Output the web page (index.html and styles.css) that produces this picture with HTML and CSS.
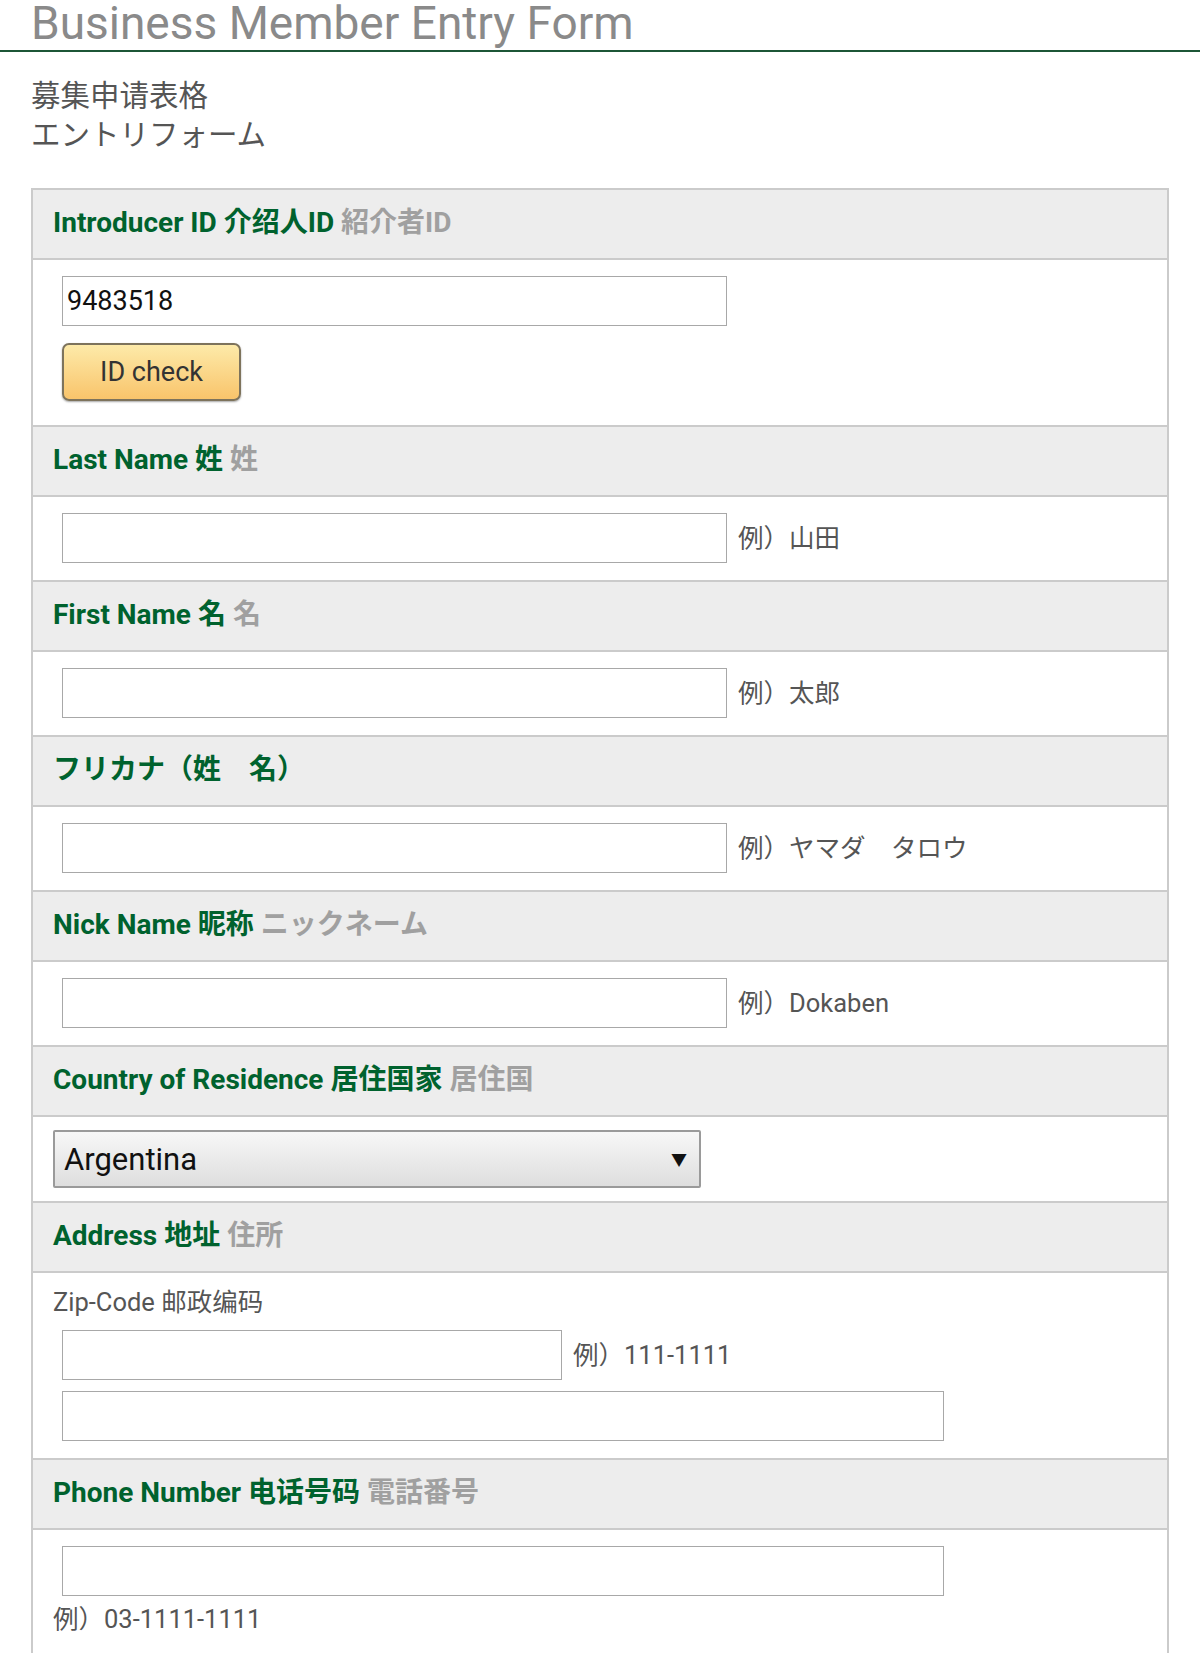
FILE: index.html
```html
<!DOCTYPE html>
<html lang="ja">
<head>
<meta charset="utf-8">
<title>Business Member Entry Form</title>
<link rel="stylesheet" href="styles.css">
</head>
<body>
<h1 class="title">Business Member Entry Form</h1>
<div class="subtitle">
  <div lang="zh-CN" class="sc">募集申请表格</div>
  <div class="jp">エントリフォーム</div>
</div>

<div class="form">
  <div class="head"><span class="en">Introducer ID </span><span class="sc">介绍人ID</span> <span class="alt jp">紹介者ID</span></div>
  <div class="body">
    <div class="input wide filled">9483518</div>
    <div class="btn">ID check</div>
  </div>

  <div class="head"><span class="en">Last Name </span><span class="sc">姓</span> <span class="alt jp">姓</span></div>
  <div class="body row">
    <div class="input wide"></div><span class="hint jp">例）山田</span>
  </div>

  <div class="head"><span class="en">First Name </span><span class="sc">名</span> <span class="alt jp">名</span></div>
  <div class="body row">
    <div class="input wide"></div><span class="hint jp">例）太郎</span>
  </div>

  <div class="head"><span class="jp">フリカナ（姓　名）</span></div>
  <div class="body row">
    <div class="input wide"></div><span class="hint jp">例）ヤマダ　タロウ</span>
  </div>

  <div class="head"><span class="en">Nick Name </span><span class="sc">昵称</span> <span class="alt jp">ニックネーム</span></div>
  <div class="body row">
    <div class="input wide"></div><span class="hint jp">例）<span class="en">Dokaben</span></span>
  </div>

  <div class="head"><span class="en">Country of Residence </span><span class="sc">居住国家</span> <span class="alt jp">居住国</span></div>
  <div class="body sel">
    <div class="select"><span>Argentina</span><span class="arrow">▼</span></div>
  </div>

  <div class="head"><span class="en">Address </span><span class="sc">地址</span> <span class="alt jp">住所</span></div>
  <div class="body addr">
    <div class="label"><span class="en">Zip-Code </span><span class="sc">邮政编码</span></div>
    <div class="row">
      <div class="input zip"></div><span class="hint jp">例）<span class="en">111-1111</span></span>
    </div>
    <div class="input long"></div>
  </div>

  <div class="head"><span class="en">Phone Number </span><span class="sc">电话号码</span> <span class="alt jp">電話番号</span></div>
  <div class="body phone">
    <div class="input long"></div>
    <div class="hint jp below">例）<span class="en">03-1111-1111</span></div>
  </div>
</div>
</body>
</html>
```
FILE: styles.css
```css
html, body {
  margin: 0;
  padding: 0;
  background: #fff;
}
body {
  width: 1200px;
  font-family: Roboto, "Noto Sans CJK JP", sans-serif;
  color: #444;
  overflow: hidden;
}
.sc { font-family: Roboto, "Noto Sans CJK SC", sans-serif; }
.jp { font-family: Roboto, "Noto Sans CJK JP", sans-serif; }
.en { font-family: Roboto, sans-serif; }

.title {
  margin: 0;
  padding: 0 0 4px 31px;
  font-size: 46px;
  line-height: 46px;
  font-weight: 400;
  color: #8a8a8a;
  border-bottom: 2px solid #1c5636;
  white-space: nowrap;
}
.subtitle {
  margin: 25px 0 0 31px;
  font-size: 29.5px;
  line-height: 39px;
  color: #555;
}
.form {
  margin: 33px 0 0 31px;
  width: 1134px;
  border: 2px solid #cbcbcb;
  border-bottom: none;
}
.head {
  height: 68px;
  line-height: 66px;
  padding-left: 20px;
  background: #ededed;
  border-bottom: 2px solid #cbcbcb;
  font-weight: 700;
  font-size: 28px;
  color: #00622e;
  white-space: pre;
}
.head span { vertical-align: top; }
.head .alt { color: #a0a0a0; }
.body {
  padding: 16px 20px 17px 29px;
  background: #fff;
  border-bottom: 2px solid #cbcbcb;
}
.row {
  display: flex;
  align-items: center;
}
.input {
  box-sizing: border-box;
  height: 50px;
  border: 1px solid #a8a8a8;
  background: #fff;
  font-size: 27px;
  line-height: 48px;
  padding-left: 4px;
  color: #111;
}
.wide { width: 665px; }
.zip { width: 500px; }
.long { width: 882px; }
.hint {
  margin-left: 11px;
  margin-bottom: 6px;
  font-size: 25.5px;
  color: #555;
  white-space: pre;
}
.btn {
  box-sizing: border-box;
  margin: 17px 0 7px;
  width: 179px;
  height: 58px;
  border: 2px solid #7d735c;
  border-radius: 7px;
  background: linear-gradient(#fdeaa9, #f9c46b);
  box-shadow: 0 1px 2px rgba(0,0,0,0.35);
  display: flex;
  align-items: center;
  justify-content: center;
  font-size: 27px;
  color: #333;
}
.sel {
  padding: 13px 20px 13px 20px;
}
.select {
  box-sizing: border-box;
  width: 648px;
  height: 58px;
  border: 2px solid #9a9a9a;
  border-radius: 2px;
  background: linear-gradient(#f7f7f7, #dedede);
  display: flex;
  align-items: center;
  justify-content: space-between;
  padding: 0 12px 0 9px;
  font-size: 31px;
  color: #111;
}
.select .arrow {
  font-size: 16px;
  color: #111;
}
.addr {
  padding: 10px 20px 17px 20px;
}
.addr .label {
  font-size: 25.5px;
  line-height: 38px;
  color: #555;
  margin-bottom: 9px;
}
.addr .row { margin-left: 9px; }
.addr .long { margin: 11px 0 0 9px; }
.phone {
  padding: 16px 20px 30px 20px;
}
.phone .long { margin-left: 9px; }
.hint.below {
  margin: 6px 0 0 0;
  line-height: 34px;
}
```
